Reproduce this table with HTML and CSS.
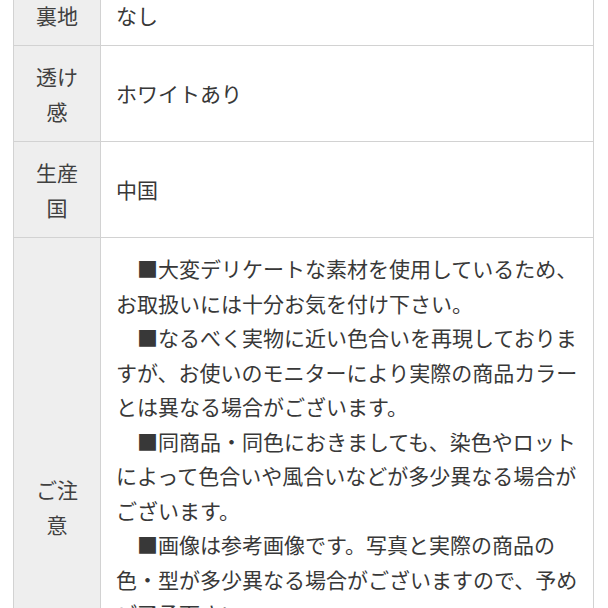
FILE: index.html
```html
<!DOCTYPE html>
<html lang="ja">
<head>
<meta charset="utf-8">
<link rel="stylesheet" href="styles.css">
</head>
<body>
<table class="spec">
  <colgroup><col class="col-label"><col class="col-value"></colgroup>
  <tbody>
    <tr><th>裏地</th><td>なし</td></tr>
    <tr><th>透け感</th><td>ホワイトあり</td></tr>
    <tr><th>生産国</th><td>中国</td></tr>
    <tr>
      <th>ご注意</th>
      <td class="notes">
        <p>■大変デリケートな素材を使用しているため、お取扱いには十分お気を付け下さい。</p>
        <p>■なるべく実物に近い色合いを再現しておりますが、お使いのモニターにより実際の商品カラーとは異なる場合がございます。</p>
        <p>■同商品・同色におきましても、染色やロットによって色合いや風合いなどが多少異なる場合がございます。</p>
        <p>■画像は参考画像です。写真と実際の商品の色・型が多少異なる場合がございますので、予めご了承下さい。</p>
        <p>■サイズは平置きにて計測しております。多少の誤差はご了承下さい。</p>
        <p>■商品の仕様は予告なく変更になる場合がございます。あらかじめご了承下さい。</p>
      </td>
    </tr>
  </tbody>
</table>
</body>
</html>
```

FILE: styles.css
```css
html, body {
  margin: 0;
  padding: 0;
  background: #ffffff;
}
body {
  font-family: "Noto Sans CJK JP", "Noto Sans", sans-serif;
  font-size: 21px;
  line-height: 34.5px;
  color: #383838;
}
.spec {
  border-collapse: collapse;
  table-layout: fixed;
  width: 581px;
  margin: -16.5px 0 0 13px;
}
.col-label { width: 87px; }
.spec th,
.spec td {
  border: 1px solid #d2d2d2;
  vertical-align: middle;
}
.spec th {
  background: #eeeeee;
  font-weight: normal;
  color: #404040;
  text-align: center;
  padding: 13px 14px;
}
.spec td {
  background: #ffffff;
  text-align: left;
  padding: 13px 14px 13px 15px;
}
.spec td.notes {
  padding-bottom: 7px;
}
.notes p {
  margin: 0;
  text-indent: 1em;
}
```
